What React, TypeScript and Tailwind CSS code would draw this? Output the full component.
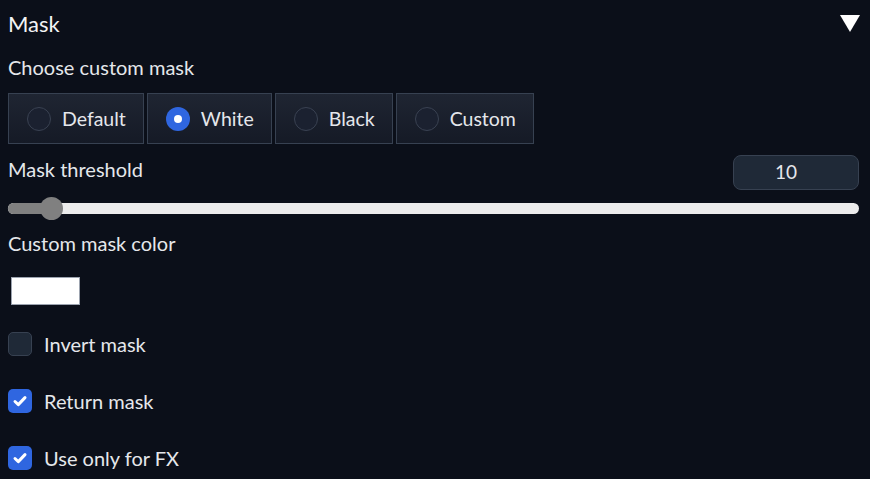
import { useState } from "react";

const font = { fontFamily: "Lato, 'Liberation Sans', sans-serif" };

function Radio({ label, checked, onClick }: { label: string; checked: boolean; onClick: () => void }) {
  return (
    <button
      onClick={onClick}
      className="flex h-full items-center border border-[#374151] bg-gradient-to-b from-[#1f2532] to-[#151a26] pl-[18px] pr-[17px]"
    >
      {checked ? (
        <span className="flex h-6 w-6 items-center justify-center rounded-full bg-[#2f66e0]">
          <span className="h-2 w-2 rounded-full bg-white" />
        </span>
      ) : (
        <span className="h-6 w-6 rounded-full border border-[#3a4252] bg-[#1b2130]" />
      )}
      <span className="ml-[11px] text-[19.5px] text-[#e5e7eb]">{label}</span>
    </button>
  );
}

function Check({ label, checked }: { label: string; checked: boolean }) {
  return (
    <div className="flex h-6 items-center">
      {checked ? (
        <span className="flex h-6 w-6 items-center justify-center rounded-[5px] bg-[#2f66e0]">
          <svg width="16" height="16" viewBox="0 0 16 16" fill="none">
            <path d="M3 8.5l3.3 3.1L13 4.6" stroke="white" strokeWidth="3" strokeLinecap="round" strokeLinejoin="round" />
          </svg>
        </span>
      ) : (
        <span className="h-6 w-6 rounded-[5px] border border-[#374151] bg-[#1f2937]" />
      )}
      <span className="ml-3 text-[20px] text-[#e5e7eb]">{label}</span>
    </div>
  );
}

export default function App() {
  const [mask, setMask] = useState("White");

  return (
    <div className="h-[479px] w-[870px] overflow-hidden bg-[#0b0f19] pl-2 pr-[11px] text-[#e5e7eb]" style={font}>
      {/* header */}
      <div className="flex h-[46px] items-center justify-between">
        <span className="text-[22px] text-[#f3f4f6]">Mask</span>
        <svg width="20" height="17" viewBox="0 0 20 17" className="-mr-[1px]">
          <polygon points="0,0 20,0 10,17" fill="white" />
        </svg>
      </div>

      <div className="flex h-[42px] items-center text-[20px]">Choose custom mask</div>

      <div className="mt-[5px] flex h-[51px] gap-[3px]">
        {["Default", "White", "Black", "Custom"].map((m) => (
          <Radio key={m} label={m} checked={mask === m} onClick={() => setMask(m)} />
        ))}
      </div>

      <div className="mt-[11px] flex h-[35px] items-start justify-between">
        <span className="text-[20px] leading-[29px]">Mask threshold</span>
        <div className="flex h-[35px] w-[126px] items-center justify-center rounded-lg border border-[#374151] bg-[#1f2937] pr-[20px] text-[19px]">
          10
        </div>
      </div>

      {/* slider */}
      <div className="relative flex h-[36px] items-center">
        <div className="h-[11px] w-full rounded-full bg-[#ececec]" />
        <div className="absolute left-0 h-[11px] w-[44px] rounded-l-full bg-[#808080]" />
        <div className="absolute left-[32px] h-[23px] w-[23px] rounded-full bg-[#808080]" />
      </div>

      <div className="flex h-[34px] items-center text-[20px]">Custom mask color</div>

      <div className="ml-[3px] mt-[17px] h-[28px] w-[69px] border border-[#9ca3af] bg-white" />

      <div className="mt-[27px] flex flex-col gap-[33px]">
        <Check label="Invert mask" checked={false} />
        <Check label="Return mask" checked={true} />
        <Check label="Use only for FX" checked={true} />
      </div>
    </div>
  );
}
